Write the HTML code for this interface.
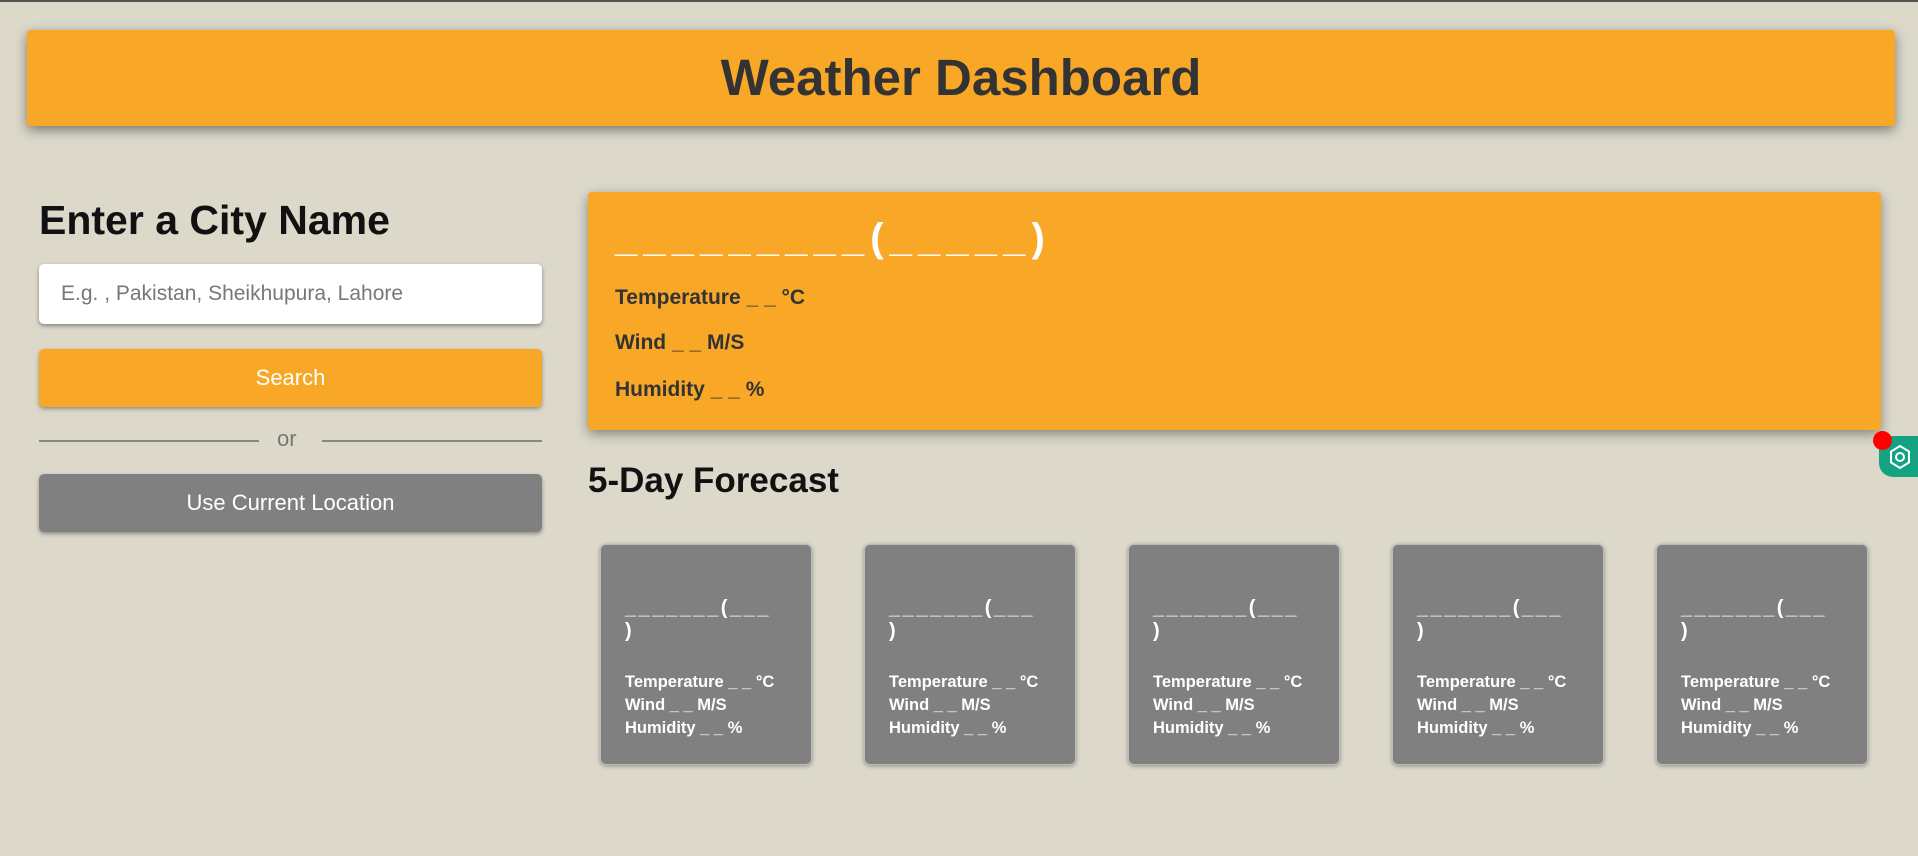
<!DOCTYPE html>
<html><head><style>
*{box-sizing:border-box;margin:0;padding:0}
body{width:1918px;height:856px;background:#dcd9cb;font-family:"Liberation Sans",sans-serif;position:relative;overflow:hidden;border-top:2px solid #555}
.hdr{position:absolute;left:27px;top:28px;width:1868px;height:96px;background:#f8a826;border-radius:3px;box-shadow:0 4px 12px rgba(0,0,0,.45);text-align:center;line-height:96px;font-size:51px;font-weight:bold;color:#333}
h2{position:absolute;left:39px;top:195px;font-size:41px;color:#111;font-weight:bold}
.inp{position:absolute;left:39px;top:262px;width:503px;height:60px;background:#fff;border-radius:5px;box-shadow:0 2px 4px rgba(0,0,0,.4);font-size:21px;color:#777;line-height:60px;padding-left:22px}
.btn{position:absolute;left:39px;width:503px;height:58px;border-radius:5px;box-shadow:0 2px 4px rgba(0,0,0,.35);color:#fff;font-size:22px;text-align:center;line-height:58px}
.line{position:absolute;top:438px;height:2px;background:#888;width:220px}
.or{position:absolute;left:277px;top:424px;font-size:22px;color:#777}
.main{position:absolute;left:588px;top:190px;width:1293px;height:238px;background:#f8a826;border-radius:4px;box-shadow:0 4px 12px rgba(0,0,0,.4);color:#333;font-weight:bold}
.main .t{position:absolute;left:27px;top:24px;font-size:40px;color:#fff;letter-spacing:-2.5px;white-space:nowrap}
.main .d{position:absolute;left:27px;font-size:21px}
h3{position:absolute;left:588px;top:459px;font-size:35px;color:#111;font-weight:bold}
.c{position:absolute;top:542px;width:212px;height:221px;background:#808080;border-radius:6px;border:1px solid #bbb;box-shadow:0 1px 4px rgba(0,0,0,.35);color:#fff;font-weight:bold;padding:52px 24px 0 24px}
.c .t{font-size:20px;line-height:23px;height:74px;letter-spacing:-1.5px;white-space:nowrap}
.c .d{font-size:16.5px;line-height:23px;white-space:nowrap}
</style></head><body>
<div class="hdr">Weather Dashboard</div>
<h2>Enter a City Name</h2>
<div class="inp">E.g. , Pakistan, Sheikhupura, Lahore</div>
<div class="btn" style="top:347px;background:#f8a826">Search</div>
<div class="line" style="left:39px"></div><div class="or">or</div><div class="line" style="left:322px"></div>
<div class="btn" style="top:472px;background:#808080">Use Current Location</div>
<div class="main"><div class="t">_ _ _ _ _ _ _ _ _ ( _ _ _ _ _ )</div>
<div class="d" style="top:94px">Temperature _ _ °C</div>
<div class="d" style="top:139px">Wind _ _ M/S</div>
<div class="d" style="top:186px">Humidity _ _ %</div></div>
<h3>5-Day Forecast</h3>
<div class="c" style="left:600px"><div class="t">_ _ _ _ _ _ _ ( _ _ _<br>)</div><div class="d">Temperature _ _ °C<br>Wind _ _ M/S<br>Humidity _ _ %</div></div>
<div class="c" style="left:864px"><div class="t">_ _ _ _ _ _ _ ( _ _ _<br>)</div><div class="d">Temperature _ _ °C<br>Wind _ _ M/S<br>Humidity _ _ %</div></div>
<div class="c" style="left:1128px"><div class="t">_ _ _ _ _ _ _ ( _ _ _<br>)</div><div class="d">Temperature _ _ °C<br>Wind _ _ M/S<br>Humidity _ _ %</div></div>
<div class="c" style="left:1392px"><div class="t">_ _ _ _ _ _ _ ( _ _ _<br>)</div><div class="d">Temperature _ _ °C<br>Wind _ _ M/S<br>Humidity _ _ %</div></div>
<div class="c" style="left:1656px"><div class="t">_ _ _ _ _ _ _ ( _ _ _<br>)</div><div class="d">Temperature _ _ °C<br>Wind _ _ M/S<br>Humidity _ _ %</div></div>
<div style="position:absolute;left:1879px;top:434px;width:50px;height:41px;background:#13a383;border-radius:14px 0 0 14px"></div>
<svg style="position:absolute;left:1888px;top:442px" width="24" height="26" viewBox="0 0 24 26"><path d="M12 2L21 7.5V18.5L12 24L3 18.5V7.5Z" fill="none" stroke="#fff" stroke-width="2"/><circle cx="12" cy="13" r="4" fill="none" stroke="#fff" stroke-width="2"/></svg>
<div style="position:absolute;left:1873px;top:429px;width:19px;height:19px;background:#f00;border-radius:50%"></div>
</body></html>
